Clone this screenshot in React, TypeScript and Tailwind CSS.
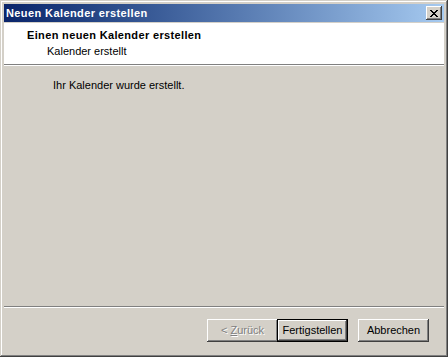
import React from "react";

const font = { fontFamily: "Tahoma, 'Liberation Sans', Arial, sans-serif" };

const Btn = ({
  children,
  disabled,
  isDefault,
}: {
  children: React.ReactNode;
  disabled?: boolean;
  isDefault?: boolean;
}) => (
  <div
    className={`w-[71px] h-[23px] flex items-center justify-center text-[11px] bg-[#d4d0c8] ${
      isDefault
        ? "border border-black shadow-[inset_-1px_-1px_#404040,inset_1px_1px_#fff,inset_-2px_-2px_#808080]"
        : "shadow-[inset_-1px_-1px_#404040,inset_1px_1px_#fff,inset_-2px_-2px_#808080,inset_2px_2px_#d4d0c8]"
    } ${disabled ? "text-[#808080] [text-shadow:1px_1px_#fff]" : "text-black"}`}
  >
    {children}
  </div>
);

export default function App() {
  return (
    <div
      style={font}
      className="w-[448px] h-[357px] bg-[#d4d0c8] p-[4px] flex flex-col shadow-[inset_-1px_-1px_#404040,inset_1px_1px_#d4d0c8,inset_-2px_-2px_#808080,inset_2px_2px_#fff]"
    >
      {/* Title bar */}
      <div className="h-[18px] flex items-center justify-between pl-[2px] pr-[2px] bg-gradient-to-r from-[#0a246a] to-[#a6caf0]">
        <span className="text-white font-bold text-[11px] tracking-[0.4px] leading-none">Neuen Kalender erstellen</span>
        <div className="w-[16px] h-[14px] bg-[#d4d0c8] flex items-center justify-center shadow-[inset_-1px_-1px_#404040,inset_1px_1px_#fff,inset_-2px_-2px_#808080]">
          <svg width="8" height="7" viewBox="0 0 8 7">
            <path d="M0 0h2v1h1v1h2V1h1V0h2v1H7v1H6v1H5v1h1v1h1v1h1v1H6V6H5V5H3v1H2v1H0V6h1V5h1V4h1V3H2V2H1V1H0z" fill="#000" />
          </svg>
        </div>
      </div>

      {/* Header */}
      <div className="mt-[1px] h-[42px] bg-white border-b border-[#808080] shadow-[0_1px_#fff] pl-[23px] pt-[5px]">
        <div className="text-[11px] font-bold tracking-[0.35px] leading-[14px] text-black">Einen neuen Kalender erstellen</div>
        <div className="text-[11px] leading-[14px] text-black pl-[20px] mt-[2px]">Kalender erstellt</div>
      </div>

      {/* Body */}
      <div className="flex-1 pl-[49px] pt-[13px]">
        <div className="text-[11px] leading-[14px] text-black">Ihr Kalender wurde erstellt.</div>
      </div>

      {/* Separator */}
      <div className="h-[2px] border-t border-[#808080] border-b border-b-white" />

      {/* Buttons */}
      <div className="h-[45px] flex items-start justify-end pt-[11px] pr-[15px]">
        <Btn disabled>
          &lt;&nbsp;<span className="underline">Z</span>urück
        </Btn>
        <div className="ml-[-1px]">
          <Btn isDefault>Fertigstellen</Btn>
        </div>
        <div className="ml-[10px]">
          <Btn>Abbrechen</Btn>
        </div>
      </div>
    </div>
  );
}
